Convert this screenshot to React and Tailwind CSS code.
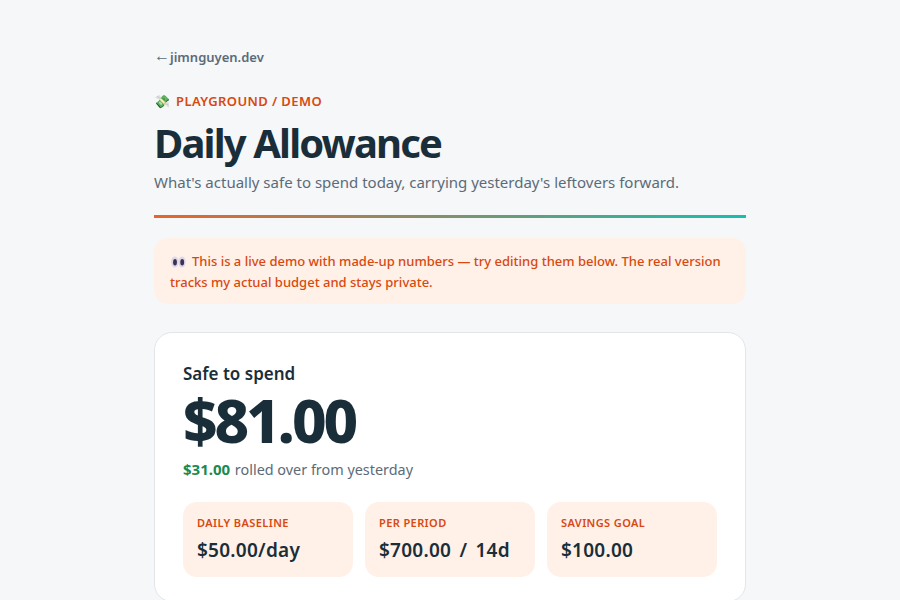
const font = { fontFamily: '"Noto Sans", "Open Sans", sans-serif' };

function Stat({ label, value }) {
  return (
    <div className="flex-1 rounded-[14px] bg-[#fff1e8] px-[14px] pt-[13px] pb-[13px]">
      <div className="text-[11px] leading-[16px] font-semibold tracking-[0.4px] text-[#d9480f]">{label}</div>
      <div className="mt-[6px] text-[19px] leading-[27px] font-semibold tracking-[0.25px] [word-spacing:3px] text-[#1a2e3a]">{value}</div>
    </div>
  );
}

function Eyes() {
  return (
    <svg className="mr-[6px] ml-[1px] inline-block align-[-2px]" width="15" height="12" viewBox="0 0 15 12" aria-hidden="true">
      <ellipse cx="3.8" cy="6" rx="3.7" ry="5.6" fill="#ddd5ea" />
      <ellipse cx="11" cy="6" rx="3.7" ry="5.6" fill="#ddd5ea" />
      <ellipse cx="4" cy="6.2" rx="1.9" ry="3.3" fill="#3a3350" />
      <ellipse cx="11.2" cy="6.2" rx="1.9" ry="3.3" fill="#3a3350" />
    </svg>
  );
}

export default function App() {
  return (
    <div className="min-h-screen bg-[#f5f7f9]" style={font}>
      <div className="mx-auto w-[592px] pt-[48px]">
        <a className="flex h-[18px] items-center text-[13px] leading-[18px] font-semibold text-[#5b6b78]"><span className="w-[16px] pb-[5px] text-[16px] leading-none">←</span><span>jimnguyen.dev</span></a>
        <div className="mt-[26px] flex items-center text-[13px] leading-[18px] font-semibold tracking-[0.4px] text-[#d9480f]"><span className="w-[22px]">💸</span><span>PLAYGROUND / DEMO</span></div>
        <h1 className="mt-[9px] text-[40px] leading-[48px] font-bold tracking-[-1.85px] text-[#1a2e3a]">Daily Allowance</h1>
        <p className="mt-[4px] text-[15px] leading-[22px] text-[#5b6b78]">What's actually safe to spend today, carrying yesterday's leftovers forward.</p>
        <div className="mt-[22px] h-[3px] bg-[linear-gradient(90deg,#e8642c,#14c0ae)]" />
        <div className="mt-[20px] rounded-[14px] bg-[#fff1e8] px-[16px] pt-[13px] pb-[11px] text-[13px] leading-[21px] font-medium text-[#d9480f]">
          <Eyes />This is a live demo with made-up numbers — try editing them below. The real version tracks my actual budget and stays private.
        </div>
        <div className="mt-[28px] rounded-[18px] border border-[#e2e6ea] bg-white px-[28px] pt-[28px] pb-[24px]">
          <div className="text-[17px] leading-[26px] font-semibold text-[#1a2e3a]">Safe to spend</div>
          <div className="text-[60px] leading-[66px] font-extrabold tracking-[-3px] text-[#1a2e3a]">$81.00</div>
          <div className="mt-[6px] text-[14.4px] leading-[20px] text-[#5b6b78]"><span className="mr-[1px] text-[15px] font-bold text-[#1a8a50]">$31.00</span> rolled over from yesterday</div>
          <div className="mt-[22px] flex gap-[12px]">
            <Stat label="DAILY BASELINE" value="$50.00/day" />
            <Stat label="PER PERIOD" value="$700.00 / 14d" />
            <Stat label="SAVINGS GOAL" value="$100.00" />
          </div>
        </div>
      </div>
    </div>
  );
}
